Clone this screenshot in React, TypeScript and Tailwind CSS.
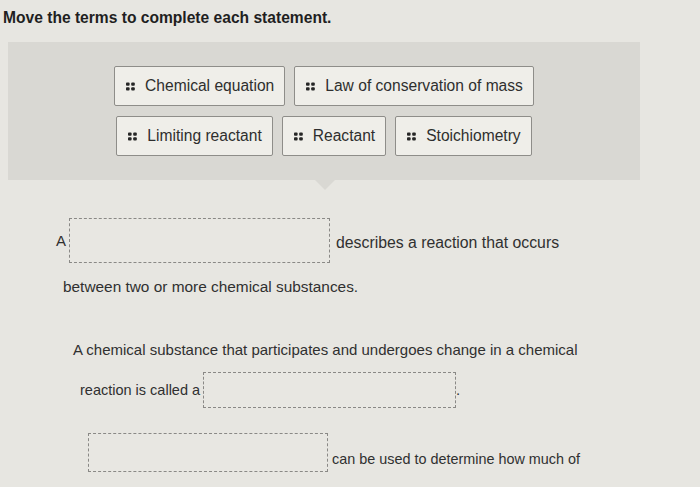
import React from 'react';

const terms = [
  ['Chemical equation', 'Law of conservation of mass'],
  ['Limiting reactant', 'Reactant', 'Stoichiometry'],
];

const Grip = () => (
  <svg width="9" height="9" viewBox="0 0 9 9" className="shrink-0">
    <rect x="0" y="0.5" width="3.6" height="3.2" rx="0.9" fill="#262626" />
    <rect x="5.2" y="0.5" width="3.6" height="3.2" rx="0.9" fill="#262626" />
    <rect x="0" y="5.3" width="3.6" height="3.2" rx="0.9" fill="#262626" />
    <rect x="5.2" y="5.3" width="3.6" height="3.2" rx="0.9" fill="#262626" />
  </svg>
);

const Chip = ({ label }: { label: string }) => (
  <div className="flex items-center gap-[10px] h-[40px] pl-[11px] pr-[10px] bg-[#efeee9] border border-[#8e8d89] rounded-[2px] text-[15.6px] text-[#2e2e2e]">
    <Grip />
    <span>{label}</span>
  </div>
);

const DropBox = ({ className }: { className: string }) => (
  <div className={`border border-dashed border-[#8a8986] bg-[#e8e7e2] ${className}`} />
);

export default function App() {
  return (
    <div
      className="w-[700px] h-[487px] overflow-hidden bg-[#e7e6e1] text-[#303030]"
      style={{ fontFamily: '"Liberation Sans", Arial, sans-serif' }}
    >
      <div className="pt-[8px] pl-[3px] text-[15.6px] leading-[20px] font-bold text-[#1f1f1f]">
        Move the terms to complete each statement.
      </div>

      <div className="relative mt-[14px] ml-[8px] w-[632px] h-[138px] bg-[#d9d8d3] flex flex-col items-center justify-center gap-[10px]">
        {terms.map((row, i) => (
          <div key={i} className="flex items-center gap-[9px]">
            {row.map((t) => (
              <Chip key={t} label={t} />
            ))}
          </div>
        ))}
        <div className="absolute left-[307px] bottom-[-10px] w-0 h-0 border-l-[10px] border-r-[10px] border-t-[10px] border-l-transparent border-r-transparent border-t-[#d9d8d3]" />
      </div>

      <div className="text-[15px] leading-[20px]">
        <div className="mt-[38px] ml-[56px] flex items-center">
          <span>A</span>
          <DropBox className="ml-[3px] w-[261px] h-[45px]" />
          <span className="ml-[6px] mt-[4px] text-[15.8px]">describes a reaction that occurs</span>
        </div>
        <div className="mt-[14px] ml-[63px] text-[15.4px]">between two or more chemical substances.</div>

        <div className="mt-[43px] ml-[73px]">
          A chemical substance that participates and undergoes change in a chemical
        </div>
        <div className="mt-[12px] ml-[80px] flex items-center">
          <span className="text-[14.5px]">reaction is called a</span>
          <DropBox className="ml-[3px] w-[253px] h-[36px]" />
          <span>.</span>
        </div>

        <div className="mt-[25px] ml-[88px] flex items-end">
          <DropBox className="w-[240px] h-[39px]" />
          <span className="ml-[4px] mb-[3px] text-[14.4px]">can be used to determine how much of</span>
        </div>
      </div>
    </div>
  );
}
